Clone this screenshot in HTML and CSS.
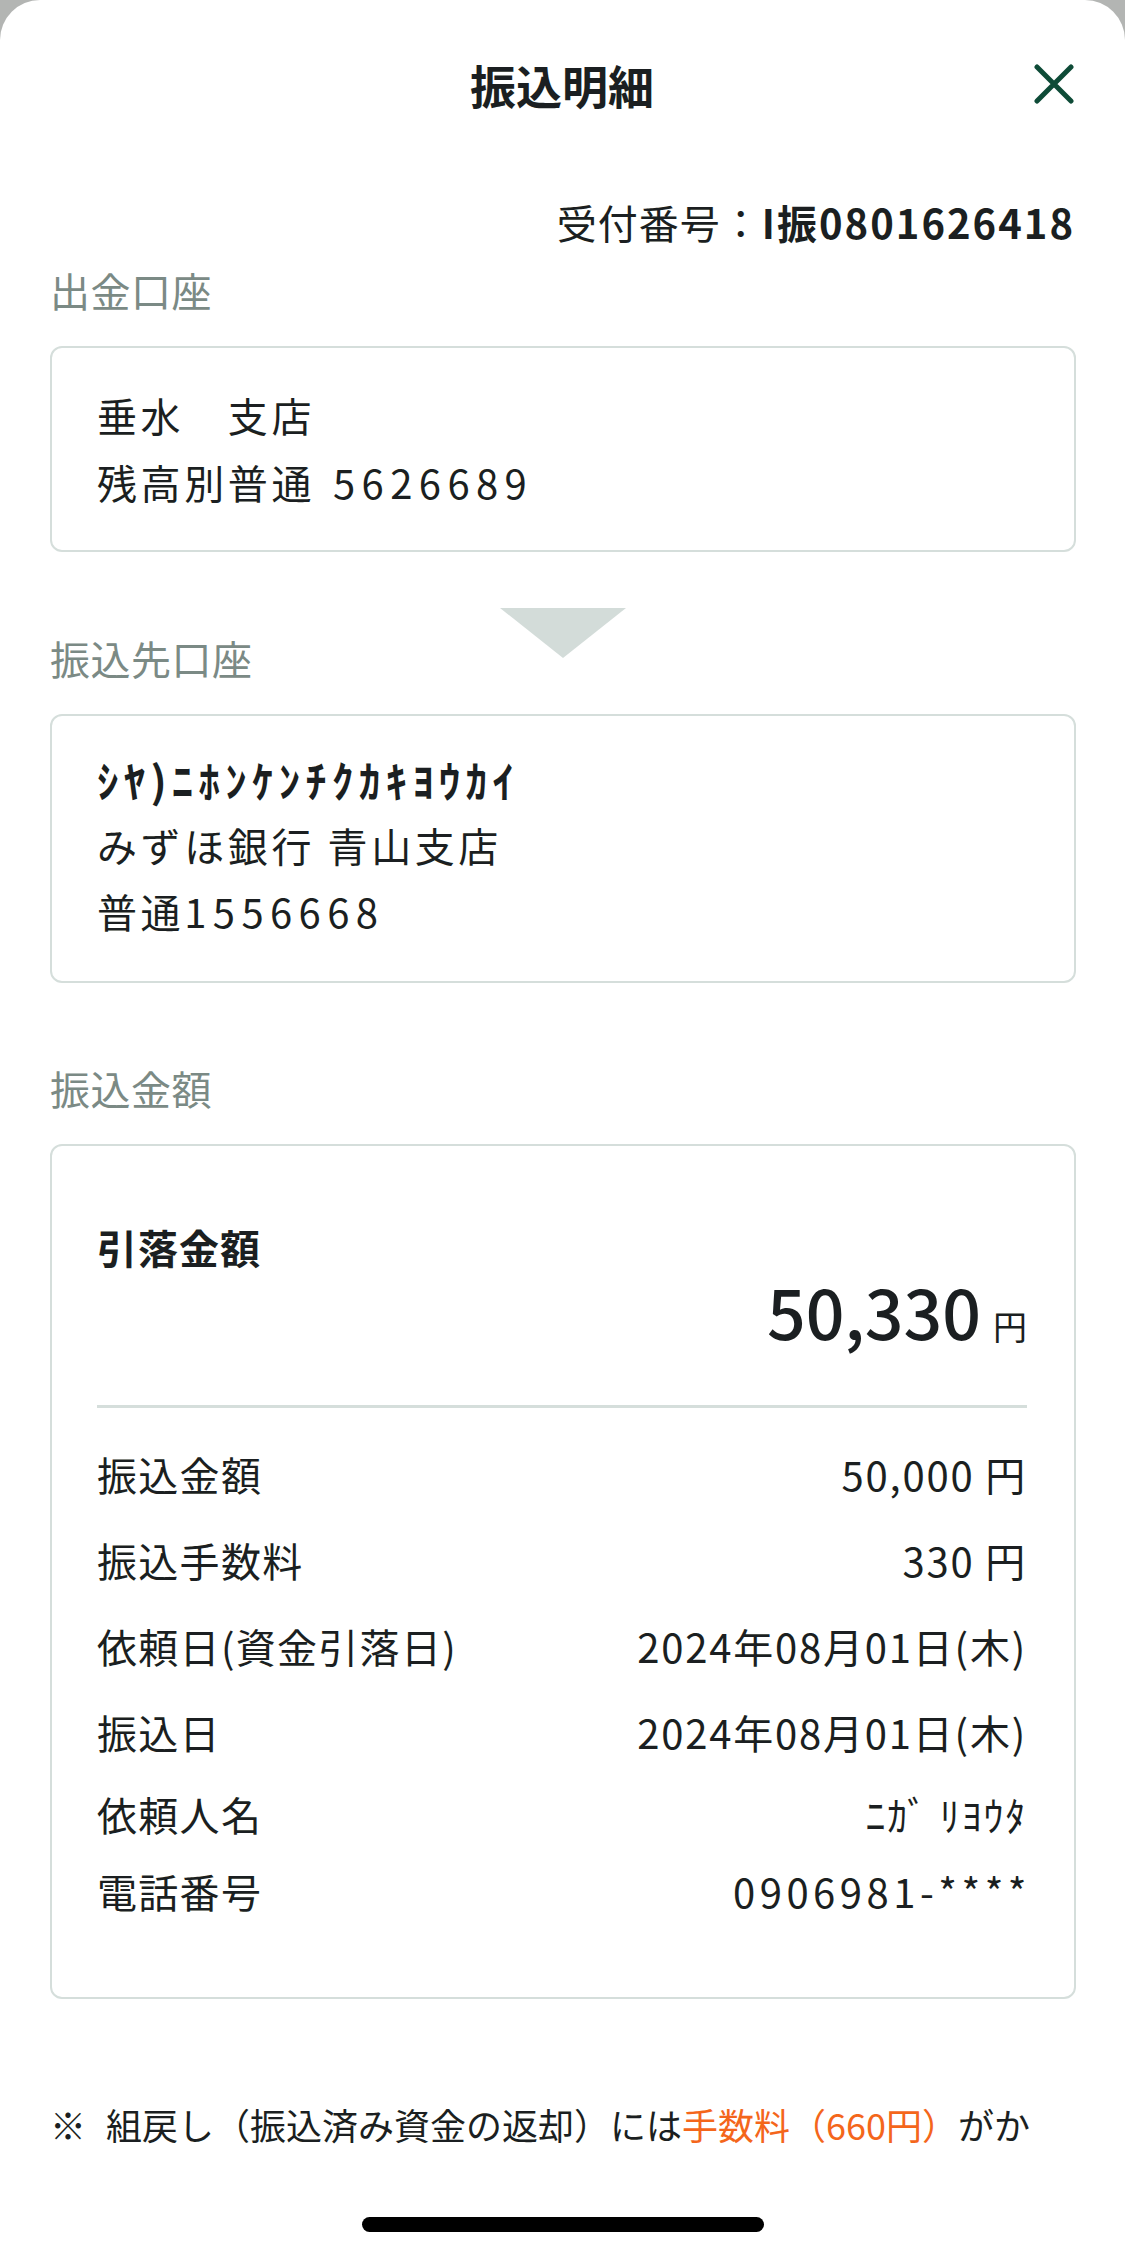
FILE: index.html
```html
<!DOCTYPE html>
<html lang="ja">
<head>
<meta charset="utf-8">
<title>振込明細</title>
<link rel="stylesheet" href="styles.css">
</head>
<body>
<div class="sheet">
  <header class="header">
    <div></div>
    <h1 class="title">振込明細</h1>
    <button class="close" aria-label="閉じる">
      <svg width="40" height="40" viewBox="0 0 40 40"><path d="M3 3 L37 37 M37 3 L3 37" stroke="#0e4b37" stroke-width="5" stroke-linecap="round" fill="none"/></svg>
    </button>
  </header>

  <div class="receipt"><span class="receipt-label">受付番号：</span><span class="receipt-no">I振0801626418</span></div>

  <main class="content">
    <h2 class="label">出金口座</h2>
    <section class="card account">
      <p class="line">垂水　支店</p>
      <p class="line">残高別普通<span class="num spaced">5626689</span></p>
    </section>

    <div class="arrow-row">
      <h2 class="label">振込先口座</h2>
      <div class="arrow"></div>
      <div></div>
    </div>
    <section class="card account dest">
      <p class="line bold">ｼﾔ)ﾆﾎﾝｹﾝﾁｸｶｷﾖｳｶｲ</p>
      <p class="line">みずほ銀行 青山支店</p>
      <p class="line">普通<span class="num">1556668</span></p>
    </section>

    <h2 class="label label-amount">振込金額</h2>
    <section class="card amount-card">
      <div class="total-title">引落金額</div>
      <div class="total"><span class="total-num">50,330</span><span class="total-yen">円</span></div>
      <hr class="sep">
      <dl class="rows">
        <div class="row"><dt>振込金額</dt><dd>50,000 円</dd></div>
        <div class="row"><dt>振込手数料</dt><dd>330 円</dd></div>
        <div class="row"><dt>依頼日(資金引落日)</dt><dd>2024年08月01日(木)</dd></div>
        <div class="row"><dt>振込日</dt><dd>2024年08月01日(木)</dd></div>
        <div class="row compact"><dt>依頼人名</dt><dd>ﾆｶﾞ ﾘﾖｳﾀ</dd></div>
        <div class="row compact"><dt>電話番号</dt><dd class="phone">0906981-****</dd></div>
      </dl>
    </section>

    <p class="note"><span class="mark">※</span>組戻し（振込済み資金の返却）には<span class="orange">手数料（660円）</span>がか</p>
  </main>

  <div class="home-indicator"></div>
</div>
</body>
</html>
```

FILE: styles.css
```css
* { box-sizing: border-box; }

html, body {
  margin: 0;
  padding: 0;
}

body {
  background: #b3b5b3;
  font-family: "Noto Sans CJK JP", "Noto Sans", sans-serif;
  color: #1b1f21;
}

.sheet {
  position: relative;
  background: #ffffff;
  border-radius: 40px 40px 0 0;
  min-height: 2256px;
  overflow: hidden;
}

.header {
  display: grid;
  grid-template-columns: 1fr auto 1fr;
  align-items: center;
  height: 168px;
  padding: 0 51px 0 50px;
}

.title {
  margin: 0;
  font-size: 46px;
  font-weight: 700;
  line-height: 56px;
  letter-spacing: 0;
}

.close {
  justify-self: end;
  width: 40px;
  height: 40px;
  padding: 0;
  border: 0;
  background: none;
  display: flex;
}

.receipt {
  margin-top: 30px;
  padding: 0 50px;
  text-align: right;
  font-size: 40px;
  line-height: 48px;
}

.receipt-label {
  letter-spacing: 1px;
}

.receipt-no {
  font-weight: 700;
  letter-spacing: 2px;
}

.content {
  padding: 0 49px 0 50px;
}

.label {
  margin: 20px 0 0;
  font-size: 40px;
  line-height: 48px;
  font-weight: 400;
  color: #7b8a85;
  letter-spacing: 0.5px;
}

.card {
  margin-top: 32px;
  border: 2px solid #d5dedb;
  border-radius: 12px;
  background: #fff;
}

.account {
  padding: 34px 45px;
}

.line {
  margin: 0;
  font-size: 40px;
  line-height: 67px;
  letter-spacing: 3.6px;
  font-weight: 400;
}

.line .num {
  letter-spacing: 6.4px;
}

.line .num.spaced {
  margin-left: 18px;
}

.line.bold {
  font-size: 43px;
  font-weight: 700;
  letter-spacing: 5.2px;
}

.dest {
  padding: 30px 45px 37px;
}

.dest .line {
  line-height: 66px;
}

.arrow-row {
  display: grid;
  grid-template-columns: 1fr auto 1fr;
  height: 74px;
  margin-top: 56px;
}

.arrow-row .label {
  margin: 0;
  align-self: end;
}

.arrow {
  width: 0;
  height: 0;
  border-left: 63px solid transparent;
  border-right: 63px solid transparent;
  border-top: 50px solid #d3dcd9;
  align-self: start;
}

.label-amount {
  margin-top: 81px;
}

.amount-card {
  padding: 77px 47px 68px 45px;
}

.total-title {
  font-size: 40px;
  line-height: 48px;
  font-weight: 700;
  letter-spacing: 1px;
}

.total {
  display: flex;
  justify-content: flex-end;
  align-items: baseline;
  gap: 12px;
  line-height: 80px;
}

.total-num {
  font-size: 68px;
  font-weight: 500;
  letter-spacing: 0;
}

.total-yen {
  font-size: 34px;
}

.sep {
  margin: 39px 0 23px;
  border: 0;
  height: 3px;
  background: #d5dedb;
}

.rows {
  margin: 0;
  display: flex;
  flex-direction: column;
}

.row {
  display: flex;
  justify-content: space-between;
  align-items: center;
  height: 86px;
  font-size: 40px;
  line-height: 48px;
}

.row.compact {
  height: 77px;
}

.row dt {
  letter-spacing: 1.3px;
}

.row dd {
  margin: 0;
  letter-spacing: 1.8px;
}

.row dd.phone {
  letter-spacing: 4.5px;
  margin-right: -4px;
}

.note {
  margin: 101px 0 0;
  font-size: 36px;
  line-height: 48px;
  white-space: nowrap;
}

.mark {
  display: inline-block;
  width: 56px;
}

.orange {
  color: #f4661b;
}

.home-indicator {
  position: absolute;
  left: 50%;
  bottom: 24px;
  width: 402px;
  height: 15px;
  margin-left: -201px;
  border-radius: 8px;
  background: #000;
}
```
